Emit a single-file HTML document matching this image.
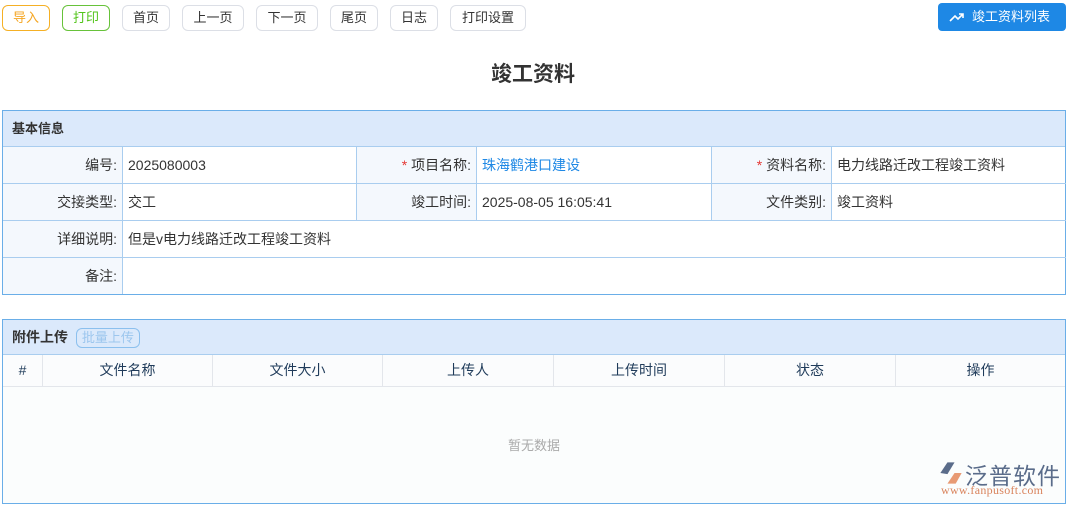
<!DOCTYPE html><html><head><meta charset="utf-8"><style>
*{box-sizing:border-box;margin:0;padding:0}
body{width:1068px;height:506px;background:#fff;font-family:"Liberation Sans","Noto Sans CJK SC",sans-serif;font-size:14px;color:#333;position:relative;overflow:hidden}
.b{position:absolute;top:5px;height:26px;border:1px solid #dcdfe6;border-radius:6px;text-align:center;line-height:24px;font-size:13px;color:#333;background:#fff}
.abs{position:absolute}
.tbl{position:absolute;left:2px;width:1064px;border:1px solid #6aaee8}
.c{position:absolute;border-right:1px solid #a9cdef;border-bottom:1px solid #a9cdef;line-height:36px;padding:0 5px}
.lb{text-align:right;background:#f4f8fd}
</style></head><body>
<div class="b" style="left:2px;width:48px;border-color:#f5b025;color:#f5a623">导入</div>
<div class="b" style="left:62px;width:48px;border-color:#67c23a;color:#52c41a">打印</div>
<div class="b" style="left:122px;width:48px">首页</div>
<div class="b" style="left:182px;width:62px">上一页</div>
<div class="b" style="left:256px;width:62px">下一页</div>
<div class="b" style="left:330px;width:48px">尾页</div>
<div class="b" style="left:390px;width:48px">日志</div>
<div class="b" style="left:450px;width:76px">打印设置</div>
<div class="abs" style="left:938px;top:3px;width:128px;height:28px;background:#1e88e5;border-radius:4px;color:#fff;line-height:28px;font-size:13px;padding-left:34px">
<svg class="abs" style="left:11px;top:8px" width="16" height="12" viewBox="0 0 16 12"><path d="M1 10L6 5l3 3 5-5M10 3h4v4" stroke="#fff" stroke-width="1.6" fill="none"/></svg>竣工资料列表</div>
<div class="abs" style="left:0;width:1068px;top:58px;text-align:center;font-size:21px;font-weight:bold;color:#333;padding-right:2px">竣工资料</div>

<div class="tbl" style="top:110px;height:185px">
<div class="abs" style="left:0;top:0;width:1062px;height:36px;background:#dbe9fb;border-bottom:1px solid #a9cdef;line-height:36px;padding-left:9px;font-weight:bold;font-size:13px">基本信息</div>
<div class="c lb" style="left:0;top:36px;width:120px;height:37px">编号:</div>
<div class="c" style="left:120px;top:36px;width:234px;height:37px">2025080003</div>
<div class="c lb" style="left:354px;top:36px;width:120px;height:37px"><span style="color:#e53935">* </span>项目名称:</div>
<div class="c" style="left:474px;top:36px;width:235px;height:37px;color:#1e88e5">珠海鹤港口建设</div>
<div class="c lb" style="left:709px;top:36px;width:120px;height:37px"><span style="color:#e53935">* </span>资料名称:</div>
<div class="c" style="left:829px;top:36px;width:234px;height:37px;border-right:none">电力线路迁改工程竣工资料</div>
<div class="c lb" style="left:0;top:73px;width:120px;height:37px">交接类型:</div>
<div class="c" style="left:120px;top:73px;width:234px;height:37px">交工</div>
<div class="c lb" style="left:354px;top:73px;width:120px;height:37px">竣工时间:</div>
<div class="c" style="left:474px;top:73px;width:235px;height:37px">2025-08-05 16:05:41</div>
<div class="c lb" style="left:709px;top:73px;width:120px;height:37px">文件类别:</div>
<div class="c" style="left:829px;top:73px;width:234px;height:37px;border-right:none">竣工资料</div>
<div class="c lb" style="left:0;top:110px;width:120px;height:37px">详细说明:</div>
<div class="c" style="left:120px;top:110px;width:943px;height:37px;border-right:none">但是v电力线路迁改工程竣工资料</div>
<div class="c lb" style="left:0;top:147px;width:120px;height:36px;border-bottom:none">备注:</div>
</div>

<div class="tbl" style="top:319px;height:185px">
<div class="abs" style="left:0;top:0;width:1062px;height:35px;background:#dbe9fb;border-bottom:1px solid #a9cdef;line-height:35px;padding-left:9px;font-weight:bold">附件上传
<span style="display:inline-block;margin-left:4px;border:1px solid #8cc0ee;border-radius:6px;color:#9cc6ee;font-weight:normal;font-size:13px;line-height:18px;padding:0 5px">批量上传</span></div>
<div class="abs" style="left:0;top:35px;width:1062px;height:32px;background:#fbfcfd;border-bottom:1px solid #e3e6eb;display:flex;color:#1f3b5a;line-height:31px;text-align:center">
<div style="width:40px;border-right:1px solid #e3e6eb">#</div>
<div style="width:170px;border-right:1px solid #e3e6eb">文件名称</div>
<div style="width:170px;border-right:1px solid #e3e6eb">文件大小</div>
<div style="width:171px;border-right:1px solid #e3e6eb">上传人</div>
<div style="width:171px;border-right:1px solid #e3e6eb">上传时间</div>
<div style="width:171px;border-right:1px solid #e3e6eb">状态</div>
<div style="flex:1">操作</div></div>
<div class="abs" style="left:0;top:67px;width:1062px;height:116px;background:#fbfdfd;text-align:center;line-height:118px;color:#aaa;font-size:13px">暂无数据</div>
</div>
<div class="abs" style="left:938px;top:460px;width:26px;height:26px">
<svg width="26" height="26" viewBox="0 0 22 22"><path d="M2 11L8 2h6l-6 10z" fill="#5a6c8a"/><path d="M8 20l6-9h6l-5 9z" fill="#e89a74"/></svg></div>
<div class="abs" style="left:965px;top:457px;font-size:23px;color:#5a6c8a;letter-spacing:1px">泛普软件</div>
<div class="abs" style="left:941px;top:483px;font-size:12px;color:#d9835c;font-family:'Liberation Serif',serif;letter-spacing:0.3px">www.fanpusoft.com</div>
</body></html>
